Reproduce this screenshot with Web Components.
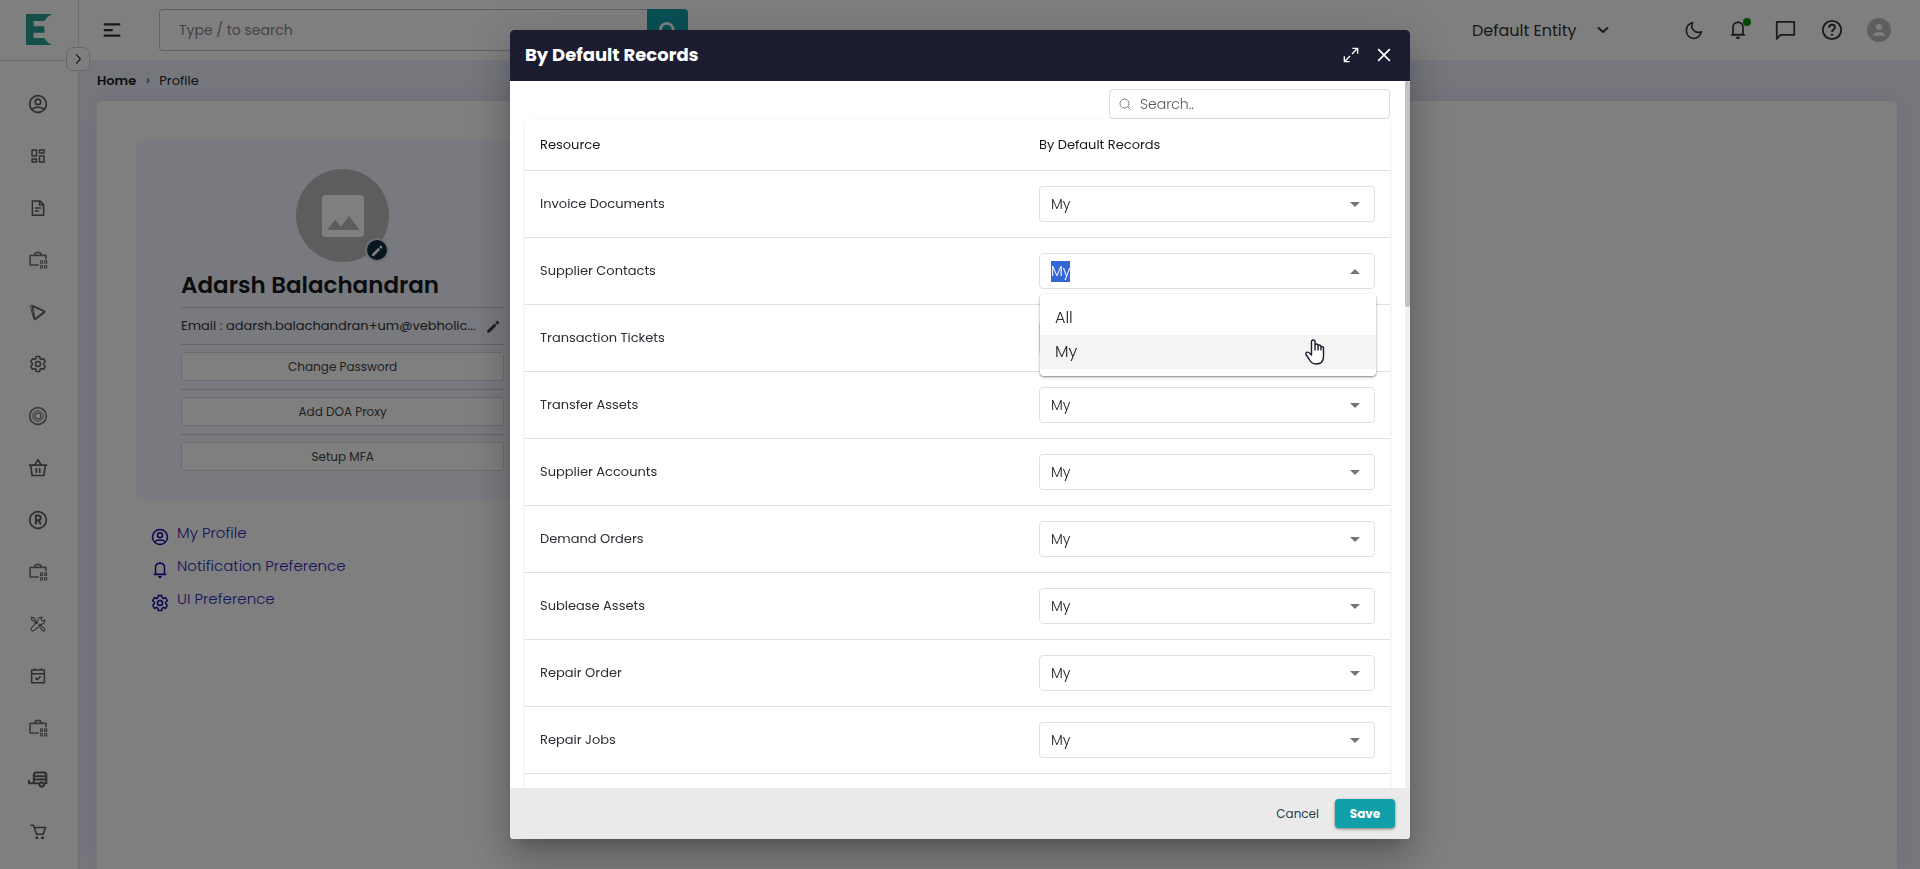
<!DOCTYPE html>
<html lang="en">
<head>
<meta charset="utf-8">
<title>Profile</title>
<style>
  html, body { margin: 0; height: 100%; overflow: hidden; }
  body { font-family: Poppins, Inter, "Open Sans", sans-serif; font-size: 13px; color: #212529; background: #fff; }
</style>
</head>
<body>
<app-shell></app-shell>
<records-dialog></records-dialog>

<script>
const ICONS = {
  user: '<circle cx="12" cy="12" r="10"/><circle cx="12" cy="9.500" r="3.300"/><path d="M5.500 18.500c1-3.500 12-3.500 13 0"/>',
  dashboard: '<path d="M4 4h6v8H4zM14 4h6v4h-6zM14 12h6v8h-6zM4 16h6v4H4z"/>',
  file: '<path d="M4.500 2.500h10l5 5v14h-15zM14 3v5h5M8 12h8M8 16h5"/>',
  briefcase: '<path d="M13 18H2.500V6.500h19V11M8 6.500C8 1.500 16 1.500 16 6.500"/><path stroke-width="1.300" d="M15 13h2.500v3H15zM20 13h2.500v3H20zM15 18.500h2.500v3H15zM20 18.500h2.500v3H20z"/>',
  play: '<path d="M4.500 4.500L21 11.500 7.500 21.500z"/><path d="M2 5Q2 2 5 3l15 7q2.500 1.500 0 3.500L9 22q-2.500 1-3-1.500z" stroke-width="1.200"/>',
  gear: '<circle cx="12" cy="12" r="3.300"/><path d="M19.430 12.980c.04-.32.07-.64.07-.98 0-.34-.03-.66-.07-.98l2.110-1.650c.19-.15.24-.42.12-.64l-2-3.460a.5.5 0 0 0-.61-.22l-2.490 1c-.52-.4-1.080-.73-1.690-.98l-.38-2.650A.488.488 0 0 0 14 2h-4c-.25 0-.46.18-.49.42l-.38 2.650c-.61.25-1.170.59-1.690.98l-2.490-1a.5.5 0 0 0-.61.22l-2 3.460c-.13.22-.07.49.12.64l2.110 1.650c-.04.32-.07.65-.07.98s.03.66.07.98l-2.110 1.650c-.19.15-.24.42-.12.64l2 3.460c.12.22.39.3.61.22l2.490-1c.52.4 1.080.73 1.690.98l.38 2.650c.03.24.24.42.49.42h4c.25 0 .46-.18.49-.42l.38-2.650c.61-.25 1.170-.59 1.690-.98l2.490 1a.5.5 0 0 0 .61-.22l2-3.460c.12-.22.07-.49-.12-.64z"/>',
  target: '<circle cx="12" cy="12" r="10"/><circle cx="12" cy="12" r="6.300" stroke-width="1.200"/><rect x="8.600" y="8.600" width="6.800" height="6.800" rx="2" stroke-width="1.500"/>',
  basket: '<path d="M1 8.500h22M3 8.500L5 21h14l2-12.500M8 8.500L12 2l4 6.500M10 12v6M14 12v6"/>',
  registered: '<circle cx="12" cy="12" r="10"/><path stroke-width="2.400" d="M9.500 17.500v-11h3.200q2.500 0 2.500 2.900t-2.500 2.900H9.500M12.500 12.500l3 5"/>',
  tools: '<path stroke-width="1.400" d="M3 3l4 1 1 2.500 3.500 3.500-1.700 1.700L6.500 8.200 4 7zM13 14l1.600-1.600 6 6q1 2-.5 2.700T17.500 20.500zM21 6.500l-3 1.500-2-2 1.500-3q-5-.8-5.500 4L3.500 17q-1.500 2 0 3.500t3.500 0L17 12q5-.500 4-5.500z"/>',
  calendar: '<path d="M3.500 4h17v17h-17zM3.500 9h17M7.500 1.500V5M16.500 1.500V5M8.500 14.500l2.500 2.500 4.500-4.500"/>',
  trailer: '<path stroke-width="2.400" d="M1.200 12v4H14M7 16V6q0-3 3-3h9q3 0 3 3v10h-2.500M7 7.500h15M7 11.500h15"/><circle cx="16.500" cy="17.500" r="2.600" stroke-width="2.400"/>',
  cart: '<path d="M2 3h4l4 12h9l3-9H7"/><circle cx="10.500" cy="19.500" r="1" fill="currentColor"/><circle cx="18" cy="19.500" r="1" fill="currentColor"/>',
  bell: '<path d="M12 3c-4 0-6 2.800-6 6v8.500h12V9c0-3.200-2-6-6-6zM3.500 18h17M12 1.200V3"/><path d="M10.500 21h3L12 22z" fill="currentColor"/>',
  moon: '<path d="M11 2C7.500 8.500 13 17 22 13.500 20.500 19 16.500 22 12 22 1.500 21.500-1 5.500 11 2z"/>',
  chat: '<path d="M2 2h20v15H6.500L2 21.500z"/>',
  help: '<circle cx="12" cy="12" r="10"/><path d="M8.800 9.500c0-4.500 6.500-4 6.500-.500 0 2.500-3.300 2.600-3.300 5.300M12 16v2.200"/>',
  menu: '<path d="M1 4.500h22M1 12h12M1 19.500h22"/>',
  chevright: '<path d="M9 4l7 8-7 8"/>',
  chevdown: '<path d="M2 7l10 9L22 7"/>',
  search: '<circle cx="11" cy="11" r="9"/><path d="M17.500 17.500L23 23"/>',
  close: '<path d="M2 2l20 20M22 2L2 22"/>',
  expand: '<path d="M14 2h8v8M22 2l-8.500 8.500M10 22H2v-8M2 22l8.500-8.500"/>',
  pencil: '<path fill="currentColor" stroke="none" d="M2 18.500V22h3.500L17 10.500 13.500 7zM20.500 7c.7-.7.7-1.500 0-2.200L19.200 3.500c-.7-.7-1.500-.7-2.200 0L15 5.500 18.500 9z"/>',
  image: '<path fill="currentColor" stroke="none" fill-rule="evenodd" d="M2 0h20q2 0 2 2v20q0 2-2 2H2q-2 0-2-2V2q0-2 2-2zM3 20h18.500l-6-8-4.700 6-3.300-4z"/>',
  person: '<path fill="currentColor" stroke="none" d="M12 6a3 3 0 1 1 0 6.200A3 3 0 0 1 12 6zM6 17.800c0-5 12-5 12 0z"/>',
  logo: '<path fill="#2a9d96" stroke="none" d="M0 0h24q-5 2-7 5.500H7v4h10v5H7v4h10q2 3.500 7 5.500H0z"/>'
};

class UiIcon extends HTMLElement {
  connectedCallback() {
    const root = this.attachShadow({ mode: 'open' });
    const size = this.getAttribute('size') || 18;
    const weight = this.getAttribute('weight') || 2;
    root.innerHTML = `<style>:host{display:inline-block;width:${size}px;height:${size}px;flex:none}svg{display:block;width:100%;height:100%}</style>
      <svg viewBox="0 0 24 24" fill="none" stroke="currentColor" stroke-width="${weight}" stroke-linejoin="round" preserveAspectRatio="none" aria-hidden="true">${ICONS[this.getAttribute('name')]}</svg>`;
  }
}
customElements.define('ui-icon', UiIcon);

function define(name, html, setup) {
  const tpl = document.createElement('template');
  tpl.innerHTML = '<style>*{box-sizing:border-box}button,input,select{font:inherit;color:inherit}</style>' + html;
  customElements.define(name, class extends HTMLElement {
    connectedCallback() {
      if (this.shadowRoot) return;
      this.attachShadow({ mode: 'open' }).append(tpl.content.cloneNode(true));
      if (setup) setup(this, this.shadowRoot);
    }
  });
}

define('side-nav', `
  <style>
    :host{display:flex;flex-direction:column;background:#fff;border-right:1px solid #dcdde4}
    nav{display:flex;flex-direction:column;padding-top:17px;border-top:1px solid #d4d5da}
    .logo{height:60px;padding:14px 26px}
    .logo svg{display:block;width:26px;height:31px}
    a{display:grid;place-items:center;height:52px;padding-right:2px;color:#5c5c5c}
    a.soft{color:#747474}
  </style>
  <div class="logo"><svg viewBox="0 0 24 24" preserveAspectRatio="none" role="img" aria-label="Logo">${ICONS.logo}</svg></div>
  <nav></nav>`, (host, root) => {
  const items = ['user','dashboard','file','briefcase','play','gear','target','basket','registered','briefcase','tools','calendar','briefcase','trailer','cart'];
  const wide = ['user','target','registered','basket','trailer','briefcase'];
  root.querySelector('nav').innerHTML = items.map(n => `<a href="#" class="${n === 'briefcase' || n === 'target' ? 'soft' : ''}" aria-label="${n}"><ui-icon name="${n}" size="${wide.includes(n) ? 20 : 18}"></ui-icon></a>`).join('');
});

define('top-bar', `
  <style>
    :host{display:flex;align-items:center;height:60px;padding:0 29px 0 24px;background:#fff;color:#333}
    button{display:grid;place-items:center;padding:0;border:0;background:none;cursor:pointer}
    form{display:flex;width:529px;height:42px;margin-left:38px}
    input{flex:1;min-width:0;padding:0 19px;border:1px solid #c4c4c8;border-right:0;border-radius:4px 0 0 4px;background:#fff;font-size:14px}
    input::placeholder{color:#85868e;opacity:1}
    form button{width:41px;border-radius:0 4px 4px 0;background:#11a0aa;color:#fff}
    .entity{display:grid;align-items:center;width:137px;margin-left:auto;margin-right:75px}
    .entity>*{grid-area:1/1}
    .entity ui-icon{justify-self:end;pointer-events:none}
    select{appearance:none;width:100%;padding:0;border:0;background:none;font-size:16px}
    .tools{display:flex;align-items:center;gap:23px}
    .tools button{width:24px;height:24px}
    .tools .moon{width:19px}
    .bell{position:relative}
    .dot{position:absolute;top:0;right:-1px;width:8px;height:8px;border-radius:50%;background:#00930f}
    .avatar{border-radius:50%;background:#bdbdbd;color:#fff}
  </style>
  <button aria-label="Menu"><ui-icon name="menu" size="18" weight="3"></ui-icon></button>
  <form><input aria-label="Search" placeholder="Type / to search"><button type="button" aria-label="Search"><ui-icon name="search" size="17" weight="4"></ui-icon></button></form>
  <div class="entity"><select aria-label="Entity"><option>Default Entity</option></select><ui-icon name="chevdown" size="12" weight="4"></ui-icon></div>
  <div class="tools">
    <button class="moon" aria-label="Dark mode"><ui-icon name="moon" size="19"></ui-icon></button>
    <button class="bell" aria-label="Notifications"><ui-icon name="bell" size="20"></ui-icon><span class="dot"></span></button>
    <button aria-label="Messages"><ui-icon name="chat" size="21"></ui-icon></button>
    <button aria-label="Help"><ui-icon name="help" size="22"></ui-icon></button>
    <button class="avatar" aria-label="Account"><ui-icon name="person" size="24"></ui-icon></button>
  </div>`);

define('profile-panel', `
  <style>
    :host{display:block;height:360px;padding:29px 45px 0;border-radius:5px;background:#f3f4ff}
    .avatar{position:relative;display:grid;place-items:center;width:93px;height:93px;margin:0 auto;border-radius:50%;background:#bbb;color:#fff}
    .edit{position:absolute;right:0;bottom:0;display:grid;place-items:center;width:24px;height:24px;padding:0;border:2px solid #dcdde4;border-radius:50%;background:#0c2c3c;color:#fff}
    h1{margin:0;padding:8px 0;height:45px;font-size:23px;line-height:30px;font-weight:600;color:#16181b;white-space:nowrap}
    .email{display:flex;align-items:center;justify-content:space-between;height:37px;border-top:1px solid #cacbd4;color:#333;font-size:13px;white-space:nowrap}
    .email button{padding:0 3px 0 0;border:0;background:none;color:#444;line-height:0}
    .row{height:45px;padding-top:7px;border-top:1px solid #cacbd4}
    .row button{display:block;width:100%;height:29px;border:1px solid #d9d9dd;border-radius:3px;background:#fff;color:#444;font-size:12px}
  </style>
  <div class="avatar"><ui-icon name="image" size="42"></ui-icon><button class="edit" aria-label="Change photo"><ui-icon name="pencil" size="13"></ui-icon></button></div>
  <h1>Adarsh Balachandran</h1>
  <div class="email"><span>Email : adarsh.balachandran+um@vebholic...</span><button aria-label="Edit email"><ui-icon name="pencil" size="15"></ui-icon></button></div>
  <div class="row"><button>Change Password</button></div>
  <div class="row"><button>Add DOA Proxy</button></div>
  <div class="row"><button>Setup MFA</button></div>`);

define('profile-link', `
  <style>
    :host{display:block}
    a{display:flex;align-items:center;gap:8px;height:33px;padding-left:15px;color:#2a26b4;font-size:15px;font-weight:300;text-decoration:none}
    ui-icon{color:#120fa8}
    span{padding-bottom:8px}
  </style>
  <a href="#"><span><slot></slot></span></a>`, (host, root) => {
  const icon = document.createElement('ui-icon');
  icon.setAttribute('name', host.getAttribute('icon'));
  root.querySelector('a').prepend(icon);
});

define('app-shell', `
  <style>
    :host{display:grid;grid-template-columns:79px 1fr;grid-template-rows:60px 1fr;height:100vh;overflow:hidden;background:#edeffb}
    side-nav{grid-row:1/3;min-height:0}
    .toggle{position:absolute;left:66px;top:47px;display:grid;place-items:center;width:24px;height:24px;padding:0;border:1px solid #d0d0d6;border-radius:7px;background:#fff;color:#333}
    main{display:flex;flex-direction:column;min-height:0;padding:0 23px 0 18px}
    ol{display:flex;align-items:center;margin:0;padding:0;height:41px;list-style:none;font-size:13px}
    a{color:#16181b;font-weight:600;text-decoration:none}
    .sep{width:23px;text-align:center}
    .card{flex:1;padding:39px;border-radius:5px 5px 0 0;background:#fff;box-shadow:0 0 20px rgba(100,110,140,.12)}
    profile-panel{width:24%;min-width:400px}
    nav{padding-top:20px}
  </style>
  <side-nav></side-nav>
  <top-bar></top-bar>
  <main>
    <ol><li><a href="#">Home</a></li><li class="sep">›</li><li>Profile</li></ol>
    <div class="card">
      <profile-panel></profile-panel>
      <nav>
        <profile-link icon="user">My Profile</profile-link>
        <profile-link icon="bell">Notification Preference</profile-link>
        <profile-link icon="gear">UI Preference</profile-link>
      </nav>
    </div>
  </main>
  <button class="toggle" aria-label="Expand menu"><ui-icon name="chevright" size="14"></ui-icon></button>`);

define('record-field', `
  <style>
    :host{display:grid;position:relative;align-items:center}
    select,input,.caret{grid-area:1/1}
    select,input{appearance:none;width:100%;height:36px;padding:0 11px;border:1px solid #dfe0e4;border-radius:4px;outline:0;background:#fff;color:#16161c;font-size:14px;font-weight:300}
    input::selection{background:#3367d6;color:#fff}
    .caret{justify-self:end;margin-right:15px;border:5px solid transparent;border-bottom:0;border-top-color:#757575;pointer-events:none}
    .up{border:5px solid transparent;border-top:0;border-bottom-color:#757575}
    ul{position:absolute;z-index:2;top:100%;left:1px;right:-1px;margin:5px 0 0;padding:7px 0;border-radius:4px;background:#fff;list-style:none;box-shadow:0 1px 2px rgba(0,0,0,.45),0 1px 6px rgba(0,0,0,.08);color:#222;font-size:16px;font-weight:300}
    li{height:34px;padding:0 15px;line-height:34px}
    li[aria-selected=true]{display:flex;justify-content:space-between;align-items:center;background:#f4f4f4}
    .hand{width:20px;height:26px;margin-right:36px}
  </style>`, (host, root) => {
  const label = host.getAttribute('label');
  const box = document.createElement('template');
  box.innerHTML = host.hasAttribute('open')
    ? `<input role="combobox" aria-expanded="true" aria-label="${label}" value="My"><span class="caret up"></span>
       <ul role="listbox"><li role="option">All</li><li role="option" aria-selected="true">My
       <svg class="hand" viewBox="0 0 20 26" fill="#fff" stroke="#1b1b2f" stroke-width="1.400" stroke-linejoin="round" stroke-linecap="round"><path d="M6.500 16V3q0-2 1.700-2T10 3v8V6.500q0-1.500 1.500-1.500T13 6.500V11 7.500Q13 6 14.300 6T16 7.500V11 9q0-1.300 1.300-1.300T18.500 9v8.500c0 5-2.500 7.500-7.500 7.500-4 0-5.500-2-7-5L1 15.500q-.500-2 1-2.300T5 14.500z"/></svg></li></ul>`
    : `<select aria-label="${label}"><option>My</option><option>All</option></select><span class="caret"></span>`;
  root.append(box.content);
  const input = root.querySelector('input');
  if (input) { input.focus(); input.select(); }
});

define('records-table', `
  <style>
    :host{display:block;flex:1;border-radius:5px 5px 0 0;box-shadow:0 1px 3px rgba(0,0,0,.14)}
    table{width:100%;border-collapse:separate;border-spacing:0;table-layout:fixed}
    th,td{padding:0 15px;border-bottom:1px solid #e0e0e0;text-align:left}
    th{height:52px;color:#16161c;font-size:13px;font-weight:400}
    td{height:67px;color:#2c2c34;font-size:13px;font-weight:400}
    th:last-child{width:366px}
  </style>
  <table><thead><tr><th>Resource</th><th>By Default Records</th></tr></thead><tbody></tbody></table>`, (host, root) => {
  const rows = ['Invoice Documents','Supplier Contacts','Transaction Tickets','Transfer Assets','Supplier Accounts','Demand Orders','Sublease Assets','Repair Order','Repair Jobs'];
  root.querySelector('tbody').innerHTML = rows.map((r, i) => `<tr><td>${r}</td><td><record-field label="${r}"${i === 1 ? ' open' : ''}></record-field></td></tr>`).join('');
});

define('records-dialog', `
  <style>
    :host{position:fixed;inset:0;display:grid;place-items:center;background:rgba(0,0,0,.5)}
    section{display:flex;flex-direction:column;width:900px;max-width:calc(100vw - 60px);height:calc(100vh - 60px);overflow:hidden;border-radius:4px;background:#fff;box-shadow:0 11px 15px -7px rgba(0,0,0,.2),0 24px 38px 3px rgba(0,0,0,.14),0 9px 46px 8px rgba(0,0,0,.12)}
    header{display:flex;align-items:center;gap:18px;height:51px;padding:0 19px 2px 15px;background:#1c1c30;color:#fff}
    h2{flex:1;margin:0;font-size:18px;font-weight:700}
    button{cursor:pointer}
    header button{padding:0;border:0;background:none;line-height:0}
    .body{flex:1;display:flex;min-height:0}
    .content{flex:1;display:flex;flex-direction:column;padding:8px 15px 0;overflow:auto;scrollbar-width:none}
    .search{display:grid;align-items:center;align-self:flex-end;width:281px;height:30px}
    .search>*{grid-area:1/1}
    .search ui-icon{margin-left:10px;color:#777;pointer-events:none}
    input{width:100%;height:100%;padding:0 10px 0 30px;border:1px solid #d9d9e0;border-radius:4px;background:#fff;font-size:14px;font-weight:300}
    input::placeholder{color:#555;opacity:1}
    .rail{width:5px;background:#f1f1f1}
    .thumb{height:32%;border-radius:3px;background:#c1c1c1}
    footer{display:flex;align-items:center;justify-content:flex-end;gap:16px;height:51px;padding:0 15px;background:#eaeaea}
    footer button{height:29px;padding:0;border:0;background:none;color:#2c3e4c;font-size:12px}
    footer .save{width:60px;border-radius:4px;background:#11a0aa;color:#fff;font-weight:700;box-shadow:0 1px 3px rgba(0,0,0,.5)}
  </style>
  <section role="dialog" aria-labelledby="title">
    <header><h2 id="title">By Default Records</h2>
      <button aria-label="Full screen"><ui-icon name="expand" size="16"></ui-icon></button>
      <button aria-label="Close"><ui-icon name="close" size="14" weight="3"></ui-icon></button></header>
    <div class="body">
      <div class="content">
        <div class="search"><input aria-label="Search records" placeholder="Search.."><ui-icon name="search" size="12"></ui-icon></div>
        <records-table></records-table>
      </div>
      <div class="rail"><div class="thumb"></div></div>
    </div>
    <footer><button>Cancel</button><button class="save">Save</button></footer>
  </section>`);
</script>
</body>
</html>
